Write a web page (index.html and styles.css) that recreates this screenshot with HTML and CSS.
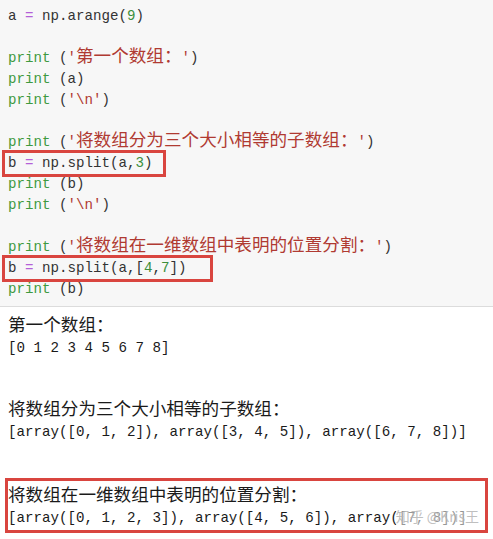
FILE: index.html
```html
<!DOCTYPE html>
<html>
<head>
<meta charset="utf-8">
<link rel="stylesheet" href="styles.css">
</head>
<body>
<div class="code">
  <div class="ln">a <span class="op">=</span> np.arange(<span class="num">9</span>)</div>
  <div class="ln"></div>
  <div class="ln"><span class="kw">print</span> (<span class="str">'<span class="zh">第一个数组：</span>'</span>)</div>
  <div class="ln"><span class="kw">print</span> (a)</div>
  <div class="ln"><span class="kw">print</span> (<span class="str">'\n'</span>)</div>
  <div class="ln"></div>
  <div class="ln"><span class="kw">print</span> (<span class="str">'<span class="zh">将数组分为三个大小相等的子数组：</span>'</span>)</div>
  <div class="ln hl hl-a">b <span class="op">=</span> np.split(a,<span class="num">3</span>)</div>
  <div class="ln"><span class="kw">print</span> (b)</div>
  <div class="ln"><span class="kw">print</span> (<span class="str">'\n'</span>)</div>
  <div class="ln"></div>
  <div class="ln"><span class="kw">print</span> (<span class="str">'<span class="zh">将数组在一维数组中表明的位置分割：</span>'</span>)</div>
  <div class="ln hl hl-b">b <span class="op">=</span> np.split(a,[<span class="num">4</span>,<span class="num">7</span>])</div>
  <div class="ln"><span class="kw">print</span> (b)</div>
</div>
<div class="out">
  <div class="ln"><span class="zh">第一个数组：</span></div>
  <div class="ln">[0 1 2 3 4 5 6 7 8]</div>
  <div class="ln"></div>
  <div class="ln"></div>
  <div class="ln"><span class="zh">将数组分为三个大小相等的子数组：</span></div>
  <div class="ln">[array([0, 1, 2]), array([3, 4, 5]), array([6, 7, 8])]</div>
  <div class="box">
    <div class="ln"><span class="zh">将数组在一维数组中表明的位置分割：</span></div>
    <div class="ln">[array([0, 1, 2, 3]), array([4, 5, 6]), array([7, 8])]</div>
    <span class="wm">知乎 @Kris王</span>
  </div>
</div>
</body>
</html>
```
FILE: styles.css
```css
html, body {
  margin: 0;
  padding: 0;
  background: #ffffff;
}
body {
  width: 493px;
  height: 539px;
  overflow: hidden;
  font-family: "Liberation Mono", "Noto Sans CJK SC", monospace;
  font-size: 14.17px;
}
.code {
  background: #f7f7f7;
  border-bottom: 1px solid #dcdcdc;
  padding: 6px 0 6px 8px;
  height: 294px;
  color: #333333;
}
.ln {
  height: 21px;
  line-height: 21px;
  white-space: pre;
}
.zh {
  font-family: "Noto Sans CJK SC", sans-serif;
  font-size: 17.6px;
  line-height: 0;
}
.kw { color: #3f9a3f; }
.str { color: #b03a32; }
.num { color: #3c8f3c; }
.op { color: #b45fd8; }
.hl {
  width: fit-content;
  margin-left: -3px;
  padding-left: 3px;
  outline: 3px solid #d9453f;
}
.hl-a { padding-right: 11px; }
.hl-b { padding-right: 24px; }
.out {
  padding: 10px 0 0 8px;
  color: #1a1a1a;
}
.box {
  position: relative;
  margin: 35px 5px 0 -3px;
  border: 3px solid #d9453f;
  padding: 6px 0 1px 0;
}
.wm {
  position: absolute;
  right: 6px;
  bottom: 3px;
  line-height: 21px;
  font-family: "Noto Sans CJK SC", sans-serif;
  font-size: 14px;
  color: rgba(180, 180, 180, 0.85);
  background: rgba(255, 255, 255, 0.55);
}
```
